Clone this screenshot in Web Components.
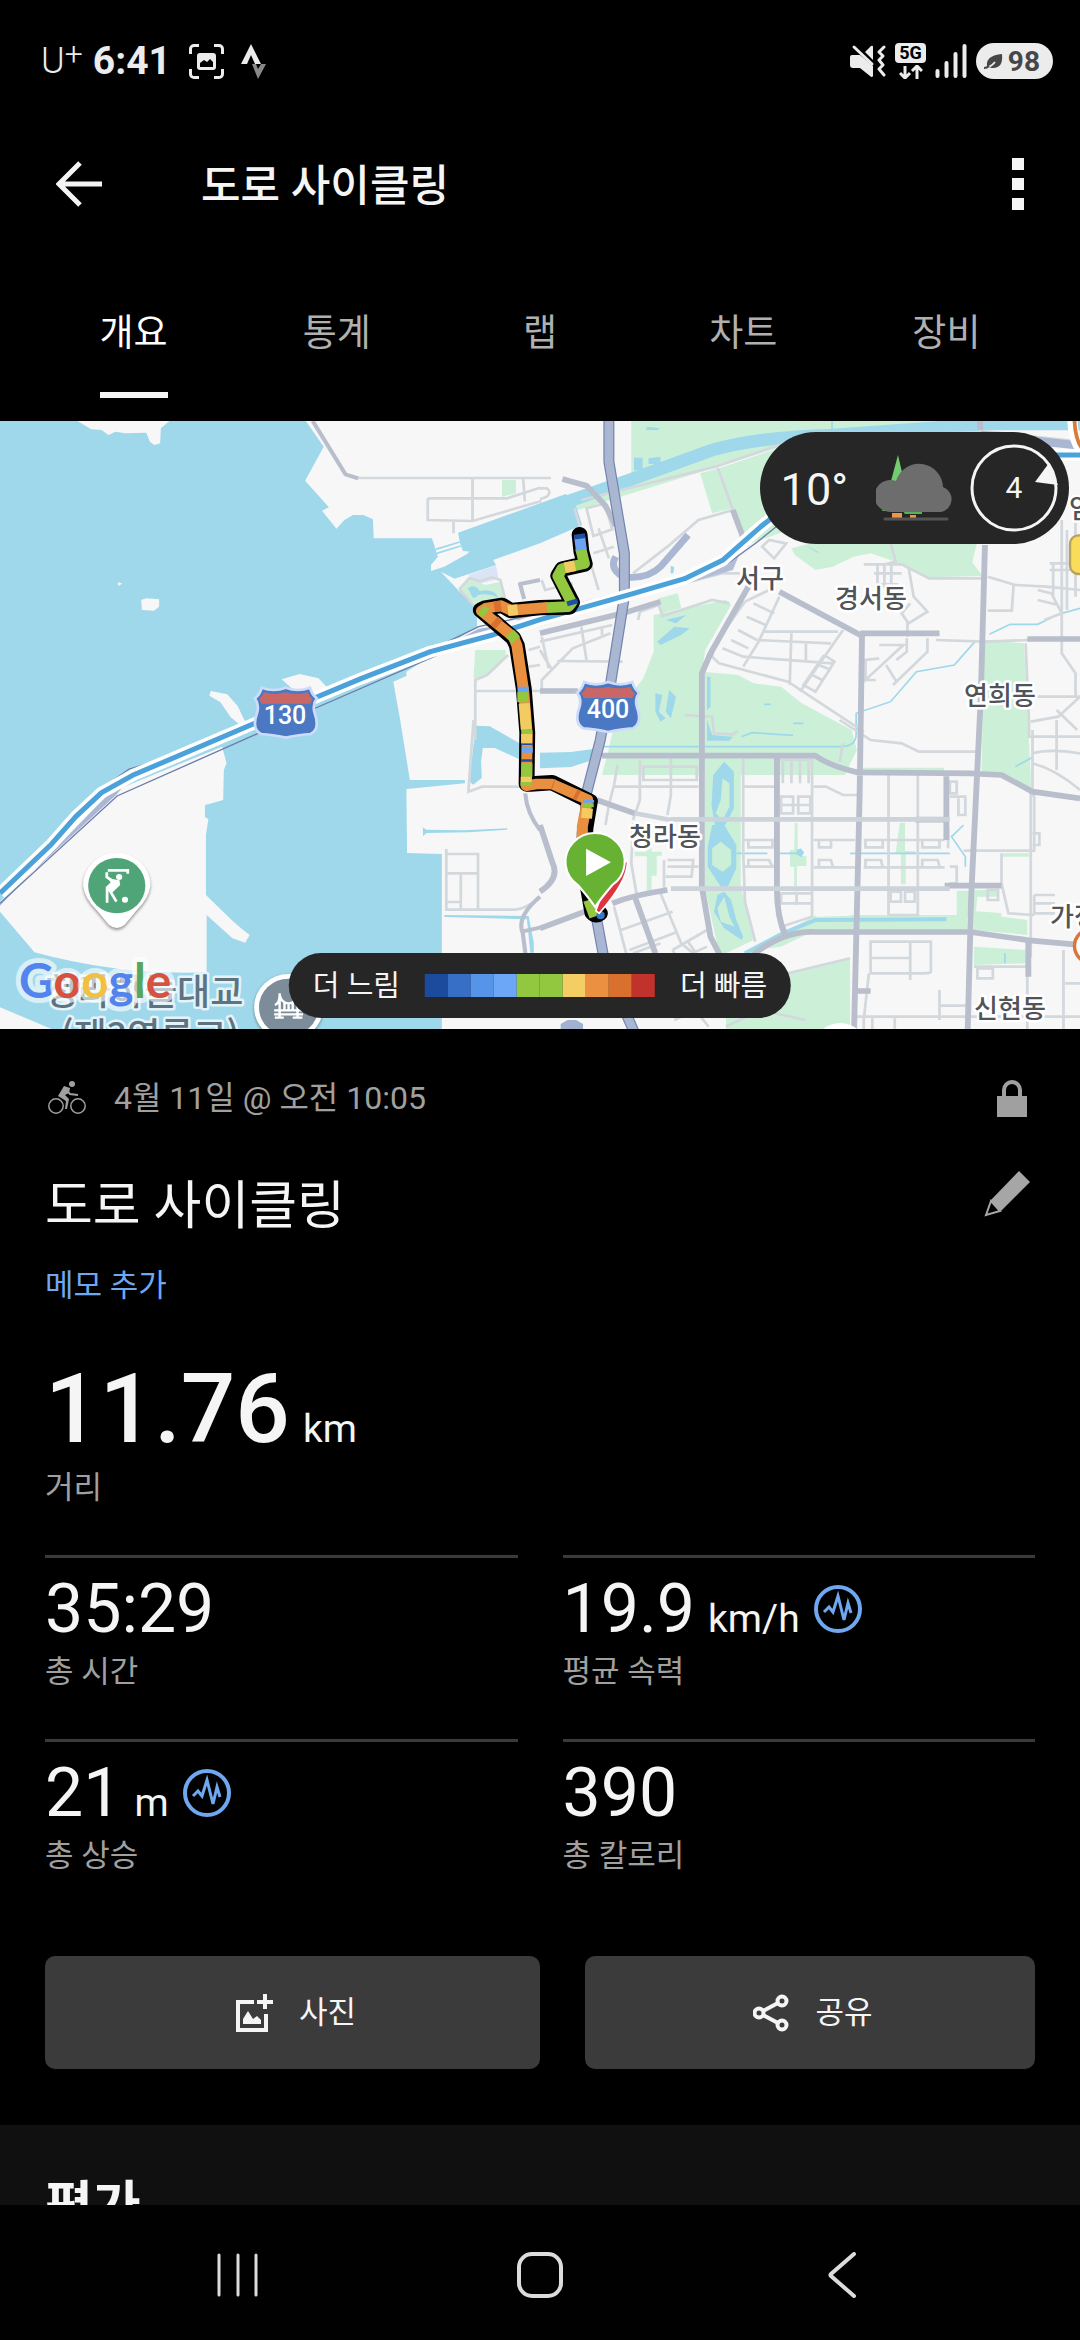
<!DOCTYPE html>
<html lang="ko">
<head>
<meta charset="utf-8">
<meta name="viewport" content="width=device-width, initial-scale=1">
<title>도로 사이클링</title>
<style>
html, body {
    margin: 0;
    height: 100%;
    background: #000;
}

body {
    font-family: Roboto, "Noto Sans CJK KR", sans-serif;
    color: #f5f5f5;
}
</style>
</head>
<body>
<activity-page>
    <status-bar slot="top"></status-bar>
    <app-header slot="top" data-title="도로 사이클링"></app-header>
    <tab-bar slot="top" data-tabs="개요,통계,랩,차트,장비"></tab-bar>

    <route-map>
        <weather-chip slot="weather"></weather-chip>
        <speed-legend slot="legend"></speed-legend>
    </route-map>

    <activity-summary>
        <span slot="date">4월 11일 @ 오전 10:05</span>
        <span slot="title">도로 사이클링</span>
        <stat-value slot="main" large data-value="11.76" data-unit="km" data-label="거리"></stat-value>
        <stat-value data-value="35:29" data-label="총 시간"></stat-value>
        <stat-value data-value="19.9" data-unit="km/h" data-label="평균 속력" data-graph></stat-value>
        <stat-value data-value="21" data-unit="m" data-label="총 상승" data-graph></stat-value>
        <stat-value data-value="390" data-label="총 칼로리"></stat-value>
    </activity-summary>

    <page-section>평가</page-section>

    <system-nav slot="bottom"></system-nav>
</activity-page>

<script>
const icons = {
    capture: [35, 35, `<path d="M1.5 10V5a3.500 3.500 0 0 1 3.500-3.500H10M25 1.500h5A3.500 3.500 0 0 1 33.500 5v5M33.500 25v5a3.500 3.500 0 0 1-3.500 3.500h-5M10 33.500H5A3.500 3.500 0 0 1 1.500 30v-5" fill="none" stroke="currentColor" stroke-width="3"/><rect x="8" y="9" width="19" height="17" rx="3" fill="currentColor"/><path d="M11 23v-4l4-3 3 2 3-3 3 3v5z" fill="#000"/>`],
    strava: [25, 35, `<path d="M10 0 0 20h6l4-9 4 9h6z" fill="currentColor"/><path d="M11 20h4l2 5 3-5h5l-8 15z" fill="#888"/>`],
    mute: [36, 34, `<path d="M0 13q0-2 2-2h8l13 11v10q-1 2-3 0L10 24H3q-3 0-3-3zM15 8l6-6q2-1 2 1v13z" fill="currentColor"/><path d="M4 3l18 17" stroke="currentColor" stroke-width="3" stroke-linecap="round"/><path d="M34 3l-5 5 4 4-4 4 4 5-4 4 5 6" fill="none" stroke="currentColor" stroke-width="3" stroke-linecap="round" stroke-linejoin="round"/>`],
    data: [24, 14, `<path d="M6 1v11M1 8l5 5 5-5M18 14V3M13 6l5-5 5 5" fill="none" stroke="currentColor" stroke-width="3"/>`],
    signal: [32, 34, `<path d="M2.500 27v5M11.500 19v13M20.500 10v22M29.500 2v30" stroke="currentColor" stroke-width="4" stroke-linecap="round"/>`],
    leaf: [19, 15, `<path d="M3 12C2 5 7 1 18 0c1 9-2 14-9 14-2 0-3-.5-4-1z" fill="currentColor"/><path d="M1 14q6-1 10-6" fill="none" stroke="#e8e8e8" stroke-width="2"/><path d="M0 14q3 0 5-2" fill="none" stroke="currentColor" stroke-width="2"/>`],
    back: [46, 46, `<path d="M24 2 3 23l21 21M3 23h43" fill="none" stroke="currentColor" stroke-width="5"/>`],
    more: [12, 52, `<path d="M0 0h12v12H0zM0 20h12v12H0zM0 40h12v12H0z" fill="currentColor"/>`],
    bike: [38, 34, `<g fill="none" stroke="currentColor"><circle cx="8" cy="25" r="7.200" stroke-width="1.500"/><circle cx="30" cy="25" r="7.200" stroke-width="1.500"/><path d="M18 8l4 5 8 1" stroke-width="2"/></g><path d="M16 5l6 2-1 5-4 2 4 4-2 10h-2l1-8-8-5z" fill="currentColor"/><circle cx="24" cy="3" r="3" fill="currentColor"/>`],
    lock: [30, 38, `<path d="M0 17h30v21H0z" fill="currentColor"/><path d="M7 18v-7a8 8 0 0 1 16 0v7" fill="none" stroke="currentColor" stroke-width="4"/>`],
    pencil: [46, 46, `<path d="M35 0l11 11-29 29L6 30z" fill="currentColor"/><path d="M7 30 2 44l14-4z" fill="none" stroke="currentColor" stroke-width="2"/>`],
    pulse: [48, 48, `<g fill="none" stroke="#6fa8f0"><circle cx="24" cy="24" r="22" stroke-width="4"/><path d="M10 27l5-5 4 5 5-16 6 24 4-17 3 10" stroke-width="3"/></g>`],
    photo: [38, 38, `<path d="M19 8H3v28h28V20" fill="none" stroke="currentColor" stroke-width="4"/><path d="M30 0v15M22 8h16" stroke="currentColor" stroke-width="4"/><path d="M8 30v-5l5-8 5 8 4-3 4 4v4z" fill="currentColor"/>`],
    share: [36, 38, `<g fill="none" stroke="currentColor" stroke-width="4"><circle cx="29" cy="7" r="4.500"/><circle cx="6" cy="19" r="4.500"/><circle cx="29" cy="31" r="4.500"/><path d="M10 17l15-8M10 21l15 8"/></g>`],
    recents: [42, 44, `<path d="M2 2v40M21 2v40M39 2v40" stroke="currentColor" stroke-width="3" stroke-linecap="round"/>`],
    home: [46, 46, `<rect x="2" y="2" width="42" height="42" rx="13" fill="none" stroke="currentColor" stroke-width="4"/>`],
    navback: [28, 46, `<path d="M26 2 3 22q-1 1 0 2l23 20" fill="none" stroke="currentColor" stroke-width="4" stroke-linecap="round"/>`],
    weather: [78, 66, `<path d="M22 0l6 26H15z" fill="#71cd6e"/><path d="M8 50h38v9H29l-2-3H6z" fill="#58b357"/><path d="M16 58h10v6H16zM34 60h6v4h-6z" fill="#ee9748"/><path d="M14 57a16 16 0 1 1 6-31 24 24 0 0 1 47 6 13 13 0 0 1-2 25z" fill="#6d6d6d"/><path d="M9 64h62" stroke="#545454" stroke-width="3" stroke-linecap="round"/>`],
};

class AppIcon extends HTMLElement {
    constructor() {
        super();
        this.attachShadow({ mode: "open" });
    }

    connectedCallback() {
        const [w, h, body] = icons[this.getAttribute("name")];
        this.shadowRoot.innerHTML = `
<style>
:host { display: inline-flex; flex: none; }
</style>
<svg width="${w}" height="${h}" viewBox="0 0 ${w} ${h}" aria-hidden="true">${body}</svg>`;
    }
}

class StatusBar extends HTMLElement {
    constructor() {
        super();
        this.attachShadow({ mode: "open" }).innerHTML = `
<style>
:host {
    display: flex;
    justify-content: space-between;
    align-items: center;
    height: 98px;
    padding: 12px 27px 0 41px;
    color: #ececec;
}
div { display: flex; align-items: center; }
.carrier { font-size: 36px; font-weight: 300; line-height: 40px; }
sup { font-size: 32px; line-height: 20px; vertical-align: 8px; }
time { font-size: 39px; font-weight: 700; line-height: 40px; margin: 0 18px 0 10px; }
.left app-icon + app-icon { margin-left: 17px; }
.right { gap: 9px; }
.net { flex-direction: column; gap: 2px; }
.net span {
    background: #ececec;
    color: #000;
    border-radius: 4px;
    font-size: 18px;
    font-weight: 700;
    line-height: 20px;
    padding: 0 4px;
}
.battery {
    gap: 5px;
    height: 36px;
    padding: 0 13px 0 8px;
    border-radius: 18px;
    background: #ececec;
    color: #464649;
    font-size: 28px;
    font-weight: 700;
}
</style>
<div class="left">
    <span class="carrier">U<sup>+</sup></span>
    <time>6:41</time>
    <app-icon name="capture"></app-icon>
    <app-icon name="strava"></app-icon>
</div>
<div class="right">
    <app-icon name="mute"></app-icon>
    <div class="net"><span>5G</span><app-icon name="data"></app-icon></div>
    <app-icon name="signal"></app-icon>
    <div class="battery"><app-icon name="leaf"></app-icon>98</div>
</div>`;
    }
}

class AppHeader extends HTMLElement {
    constructor() {
        super();
        this.attachShadow({ mode: "open" }).innerHTML = `
<style>
:host {
    display: flex;
    align-items: center;
    height: 148px;
    padding: 0 40px;
}
button {
    display: flex;
    justify-content: center;
    padding: 16px;
    border: 0;
    background: none;
    color: #f5f5f5;
}
h1 {
    flex: 1;
    margin: 0 0 0 83px;
    padding-top: 4px;
    font-size: 43px;
    font-weight: 500;
    line-height: 60px;
}
</style>
<button aria-label="뒤로"><app-icon name="back"></app-icon></button>
<h1></h1>
<button aria-label="더보기"><app-icon name="more"></app-icon></button>`;
    }

    connectedCallback() {
        this.shadowRoot.querySelector("h1").textContent = this.getAttribute("data-title");
    }
}

class TabBar extends HTMLElement {
    constructor() {
        super();
        this.attachShadow({ mode: "open" }).innerHTML = `
<style>
:host { display: block; }
nav {
    display: grid;
    grid-auto-flow: column;
    grid-auto-columns: 1fr;
    justify-items: center;
    padding: 48px 32px 23px;
}
button {
    padding: 0 0 30px;
    border: 0;
    border-bottom: 6px solid transparent;
    background: none;
    color: #b0b0b0;
    font: 400 37px/56px Roboto, "Noto Sans CJK KR", sans-serif;
}
button[aria-selected="true"] { color: #fff; border-color: #f5f5f5; }
</style>
<nav role="tablist"></nav>`;
        this.nav = this.shadowRoot.querySelector("nav");
    }

    connectedCallback() {
        this.nav.innerHTML = this.getAttribute("data-tabs").split(",")
            .map((name, i) => `<button role="tab" aria-selected="${i === 0}">${name}</button>`)
            .join("");
    }
}

class WeatherChip extends HTMLElement {
    constructor() {
        super();
        this.attachShadow({ mode: "open" }).innerHTML = `
<style>
:host {
    display: flex;
    align-items: center;
    height: 112px;
    padding: 0 11px 0 21px;
    border-radius: 56px;
    background: #262626;
}
.temp { font-size: 45px; line-height: 56px; margin-right: 28px; padding-top: 4px; }
.wind {
    display: grid;
    place-items: center;
    margin-left: 16px;
    font-size: 30px;
    line-height: 36px;
}
.wind > * { grid-area: 1 / 1; }
</style>
<span class="temp">10°</span>
<app-icon name="weather"></app-icon>
<div class="wind">
    <svg width="88" height="88" viewBox="0 0 88 88"><circle cx="44" cy="44" r="42" fill="none" stroke="#f5f5f5" stroke-width="3"/><path d="M65 38 79 19l9 22z" fill="#f5f5f5"/></svg>
    <span>4</span>
</div>`;
    }
}

const speeds = ["#1c4a9c", "#386fc6", "#5694ea", "#6ca6f6", "#92c740", "#92c740", "#f4cd65", "#ea9040", "#da702e", "#c1322c"];

class SpeedLegend extends HTMLElement {
    constructor() {
        super();
        this.attachShadow({ mode: "open" }).innerHTML = `
<style>
:host {
    display: flex;
    align-items: center;
    gap: 25px;
    height: 65px;
    padding: 0 24px;
    border-radius: 33px;
    background: #262626;
    font-size: 29px;
    line-height: 40px;
    white-space: nowrap;
}
.bar { display: flex; }
i { width: 23px; height: 23px; }
</style>
<span>더 느림</span>
<div class="bar">${speeds.map(c => `<i style="background:${c}"></i>`).join("")}</div>
<span>더 빠름</span>`;
    }
}

const shield = `<path d="M-90-40q14-10 20-32 35 14 70 0 35 14 70 0 6 22 20 32-14 20-6 45 16 48-12 62-32 2-72 11-40-9-72-11-28-14-12-62 8-25-6-45z" fill="#4a78c2" stroke="#cddcfa" stroke-width="8"/><path d="M-78-38q10-6 14-20 32 10 64 0 32 10 64 0 4 14 14 20l-8 14H-70z" fill="#c96767"/>`;

class RouteMap extends HTMLElement {
    constructor() {
        super();
        this.attachShadow({ mode: "open" }).innerHTML = `
<style>
:host { display: block; position: relative; height: 608px; }
svg { display: block; width: 100%; height: 100%; background: #f7f7f7; }
slot { display: block; position: absolute; }
slot[name="weather"] { top: 11px; right: 11px; }
slot[name="legend"] { bottom: 11px; left: 50%; transform: translateX(-50%); }

.water { fill: #9fd8eb; }
.creek { fill: none; stroke: #9fd8eb; stroke-width: 5; }
.park { fill: #ccefd8; }
.land { fill: #f7f7f7; }
.lane { fill: none; stroke: #d3d8dd; stroke-width: 8; }
.road { fill: none; stroke: #b8becb; stroke-width: 17; stroke-linejoin: round; }
.edge { fill: none; stroke: #7584ad; stroke-width: 32; stroke-linejoin: round; }
.highway { fill: none; stroke: #aab7d3; stroke-width: 25; stroke-linejoin: round; }
.case { fill: none; stroke: #fff; stroke-width: 36; stroke-linejoin: round; }
.rail { fill: none; stroke: #4ba1d9; stroke-width: 15; stroke-linejoin: round; }
.track { fill: none; stroke-width: 32; stroke-linejoin: round; }
.place { font: 500 26px "Noto Sans CJK KR", sans-serif; fill: #505357; stroke: #fff; stroke-width: 5px; stroke-linejoin: round; paint-order: stroke; text-anchor: middle; }
.bridge { font-size: 36px; fill: #5e7380; stroke: #e3f3fa; }
.number { font: 500 25px Roboto, sans-serif; fill: #fff; text-anchor: middle; }
.google { font: 700 48px Lato, sans-serif; stroke: #fff; stroke-opacity: .6; stroke-width: 10px; stroke-linejoin: round; paint-order: stroke; }
</style>
<svg viewBox="0 0 1080 608" preserveAspectRatio="xMidYMid slice" role="img" aria-label="경로 지도">
<!-- geometry is on a grid of about 3 units per pixel -->
<g transform="scale(.34439 .33333) translate(0 -3)">
    <path class="water" d="M0 3H225L265 28 295 30 315 45 335 35 365 40 425 38 435 65 448 75 465 70 467 25 492 3H888L940 80 886 182 955 262 935 272 977 326 1000 300 1025 285 1055 285 1083 298 1085 355H1254L1262 378 1272 410 1252 435V452L1290 440 1360 400 1340 395 1330 338 1568 250 1643 222 1668 240 1690 315 1568 370 1432 420 1440 435 1320 476 1280 455 1330 510 1385 560V620L1180 755V768L1142 785 1162 900 1190 1080H1350V1090L1180 1107 1182 1299 1283 1302V1827H150L0 1762z"/>
    <path class="land" d="M1262 378l70-20 12 35 22 2-75 30-20 20-19 8v-18l20-25z"/>
    <path d="M1265 388l70-22M1268 400l70-22" stroke="#9fd8eb" stroke-width="5"/>
    <path class="land" d="M410 540l15-5 37 3v22l-15 12-35-2zM343 486l12 5-12 7zM818 778l52-16 55 13 23 25-8 22-80-5zM612 813l48 10 30 35 22 47-12 12-30-25-30-45-32-20zM685 900h15l12 15z"/>
    <path class="land" d="M645 980l13 50-8 20-2 90-33 10-20 5v35l10 8-7 47v180l77 77 25 23 25 20-13 23-37-13-75-70v172q-250 10-500-60L0 1475V1445L290 1130z"/>
    <path class="park" d="M1360 475l50 20 45-10 12 50-80 20-58-42zM1380 690h88v20l-58 60-35 5zM1458 180h40v40l-40 10z"/>
    <path d="M1360 465l80-30 8 42-60 15z" fill="#dbe4f5"/>
    <path class="water" d="M1358 505q20-15 35 8 40-10 55 20-30-15-60-8-5 10-15 8zM1382 917l40 2 120 70v45l-105-50-35 0-5 40 2 50-25 20-12-10z"/>
    <path class="water" d="M1228 1222l10 7 110 2 125-6v4l-110 8-125 2-10 10zM1290 1485l245 3 15 80v30h-10l-10-100-240-7z"/>
    <path class="lane" d="M1040 174H1600M1372 174v128M1242 235v65l130 3 200-60M1242 235h230l96-32M1519 174l5 70M1317 305v35M1335 510l50 55 80-35-12-50-25-8-35 12-30-10-30 35M1380 960v-180l35-15 60-60M1380 813h190M1535 690l33-10M1535 740l33-5M1375 900l-15 215 40-15h110M1296 1287v182h200q40-5 70-40M1296 1302h92v168M1296 1360h92M1338 1362v104M1296 1446h42"/>
    <path class="road" d="M908 3l95 160 37 12M1525 1120q5 60 43 110M1568 1430q-70 60-50 110l10 80M1515 1535l53-12M1568 480l-58 12 12 45" style="stroke-width:12"/>

    <g transform="translate(1568 0)">
        <path class="park" d="M265 3H1300L700 80 515 140 110 270 95 240 265 170zM465 160l55-15 200-70h200v180L600 375l-40-110-60 15zM730 385l50-13h488l-13 55 30 41-155 4-70-37-100-35-50 10-60 30-50 10-60-45z"/>
        <path class="park" d="M330 585l210-45 15 15-75 135-10 65 105 10 45 25 80 10 60 50 145 80 15 60-35 75H180l20-80 25-110 75-100 30-80zM1290 660l115 10 20 400v35l-80-45-63-5zM345 535l55-15 10 45-55 15zM1420 3h148v30l-148-15z"/>
        <path class="park" d="M478 1015h105v385l37 160-80 40h-20l-42-200zM620 1590l180-105h440v45H800l-100 50zM720 1660l180-45v212H540v-40zM938 1043h235v12H938zM740 1208h8v100h26v30h-28v60h-8v-58h-12v-50h12zM1045 1208h15v85h30v10h-28v90h-14v-90h-16zM275 1295h35v-80h14v80h30v12h-15v60h-15v45h-14v-103h-35zM1260 1410h70l10 80 75 10v45l-155-15zM1260 1580l155 10v40l-155 5zM1340 1300h80v10h-80zM1210 1412h35v80h-35z"/>
        <path class="land" d="M1270 1430h60l20 50-84-6zM800 1412h100v75l-100 3z"/>
        <path class="water" d="M273 113h25v38h-25zM315 115l35-5v22h-35zM310 20l40 5-10 5h-32zM340 665l50-45 45 5-25 20-60 30zM365 600l60-15-30 25zM485 770h10v90l-10 10zM335 820l20 5-10 50 20 20-15 10-15-30zM375 810l20 20-15 65-15-20zM485 900l15 45 60 5-10 12h-65zM770 375l45 25-15-5zM380 437l10 5-3 18h-8z"/>
        <path class="water" d="M535 1025l28 30v110l-25 50h-30l-10-60 5-90zM500 1215h35l35 60v70l-25 55h-20l-38-60v-60zM535 1415l20 25 15 60 20 50-5 10-50-35-30-50 10-50z"/>
        <path class="park" d="M530 1075l20 15v70l-20 40-20-20 15-40zM525 1265l30 25v45l-25 20-30-20v-50zM535 1430l15 60 15 30-40-15-10-40z"/>
        <path class="water" d="M0 998l90-2 70-10-10 35-60 20-90 4zM745 1290l12-5 10 12-8 15-14-8z"/>
        <path d="M85 243L260 180 500 90Q640 50 850 45L1300 12H1568" fill="none" stroke="#9fd8eb" stroke-width="38"/>
        <path class="creek" d="M848 3v30M180 980H870q50 0 48-40v-60l100-35 75-90 110-20 60-70M1305 643l60-30h80l60-30 63-18M1380 1040l50-28M570 1300h90M690 1300h65M900 1300h290M1230 1215l-35 35 40 60v30M1350 1600v30M585 950l30-12 120 8M735 910h30M650 853h20"/>
        <path d="M595 1600l110-60 95-40 380-2" fill="none" stroke="#9fd8eb" stroke-width="12"/>

        <path class="lane" d="M0 205h20q15 10 0 25l-20 8M135 265l45-12 15 20 15 55-55 20zM170 325l30 90M155 400l60-20M5 480l10 30 80-20M100 265l70 245M120 240l390-100 200-70 140-15 450-20 268 30M515 140l45 130-100 30-90 80-100 80M350 590l150-50 50 10M380 500l150-40h50M285 600l5-25 55-20 10 30M5 650l20 95M0 665l210-50M120 620l15 100M180 620v25M5 810V780l90-95 110-45M50 723l190 2M0 690l35 60"/>
        <path class="lane" d="M595 545l70-35M595 545l-90 130-5 35 20 20 200 55 220 150M695 530l-60 135-45 75M620 550l60 30M600 590l55 25M575 630l55 30M555 660l50 25M530 685l60 25 260 20M650 635h215M630 660l215 10M730 640l-5 155M772 670v50M880 630l-125 185M825 705l30 20-55 90-35-20 60-90M810 735l35 15M790 765l30 15M645 380l35 35 35-45-50-10zM1018 370l15 55-40 10M940 433h110l80 42h160M980 433v60h60M1000 433v70M1020 433v70M970 460h80M1070 440l15 90 40 45-55 35-20-30 25-30M1067 605v45M985 675h70l-110 105v-60l40-5M1065 655v40l-30 25M1125 655v40l-100 100M1005 735l30 50M945 780h30"/>
        <path class="lane" d="M1300 470l80 25 90 5 98 10M1375 497l-5 75h-70M1445 510l40 10 30 60-50 20M1480 430h60M1480 450h60M1490 430v100M1515 300v400l40 60v70M1530 330v240M1445 830h123M1410 670l10 240v40h148M1425 905l80-15 63-60M1500 870l60 60M1150 660l140 5 130-5M1445 540l60 15M1555 280v250M420 885l80 5 5 50 55 3 15-10"/>
        <path class="lane" d="M870 900l90 60 90 10 50 25h165M880 970l-10 55M225 1035l-10 60 -15 60-10 60M215 1100h245M290 1020v120l-20 60M380 1015v110l-10 60M300 1040h155v40H300zM270 1210l-5 120 15 90M360 1320v90M370 1320h75l-5 50h-75M370 1340h90M215 1460l60 240M235 1530l150-55M260 1590l140-55M350 1420l60 150 70 60M385 1590l100-60M385 1590l15 30 85-40M430 1565l20 30M270 1600l80-30"/>
        <path class="lane" d="M590 1015v280l5 150 30 120M590 1100h100M590 1260h100M590 1340h100M605 1262v20h70v-20M605 1340v-20h60l10 20M695 1025v-5h95v470l-90 30M705 1025v65M730 1025v65M755 1025v65M780 1025v65M795 1100h35l50 25h50M795 1260h120M795 1342h120M1012 1065v420h85V1065M700 1130h35v50h-35zM750 1130h35v50h-35zM700 1155h90M700 1420h90v30h-90zM745 1415v40M810 1262v20h35v-20M810 1340v-20h35l5 20M945 1262v20h50v-20M945 1340v-20h45l5 20M1110 1262v20h50v-20M1110 1340v-20h45l5 20M1018 1415h30v30h-30zM1060 1415h28v30h-28zM940 1260h235M940 1342h235M1190 1085h20v35h-20zM1190 1130h45v55h-20v-50M1185 1225v60M1190 1340h20v50h-20M1230 1292h205V1110M1340 1300v90l20 90 75 5M1430 1240h20v35h-20M1425 1110v500M1300 1410h30v30h-30zM1435 1425h60M1435 1450h60M1435 1480h60M1435 1425v60"/>
        <path class="lane" d="M960 1565h175v90q0 5-20 5H960zM960 1614h115M1075 1565v115M955 1660l-15 140v27M915 1790h653M720 1660l180-45M1160 1710v90M1160 1757h80M1270 1645h45v30h-45zM1415 1640h-155M1520 1590v237M1415 1560v267M1525 1690h43M965 1795v32M1030 1795v32M1430 930v200M1430 1000q50-15 138 0M1430 1030q70 20 138 80M1500 900v150M540 1820l100-50 130 30M390 1800l60-30 40 50" />
        <path class="road" d="M65 177l70 20 55 60 30 60M605 500l-110 200-25 60V1400l25 150 30 60M695 515l235 130M930 640h230M1415 657h153M935 645L928 1130 912 1827M1278 3V30M1292 375L1280 830 1252 1430 1242 1827M180 1007h620q40 30 120 50l330 3 90 5 90 50 138 20M688 1010v400q0 80 25 140M1180 1060v200M1090 1199h88M165 1140l110 40M0 1525l130-50M210 1450q60-25 160-40M275 1430l60 170M600 1620q100-90 200-84h450l170 25 130 12M1175 1397h165M0 640l240-60 110-35M0 813h110M1418 1560v110M560 270l40 110M700 1510l12 35M920 1713h40M0 1415q60-40 35-90l-35-110"/>
        <path d="M380 1198h810M380 1406h810M275 1180l105 20" fill="none" stroke="#cdd3da" stroke-width="14"/>
        <path d="M220 410q-20 35 20 60 70 10 110-30l80-95" fill="none" stroke="#aab7d3" stroke-width="20"/>
        <path d="M-70 600l320-90 230-50 100-60 -20 50-300 90-270 80z" fill="#b3bdd8"/>
        <path class="edge" d="M200-10V125L245 400V530L205 790 175 960 130 1140 165 1500 190 1640 275 1840"/>
        <path class="highway" d="M200-10V125L245 400V530L205 790 175 960 130 1140 165 1500 190 1640 275 1840"/>
        <path class="highway" d="M1280 45l290 32"/>
        <path d="M60 1827v-15l20-12h25l20 12v15z" fill="#a3b1d0"/>
    </g>

    <path d="M0 1447l340-325 40-52 400-175 470-194 140-75 130-20v20l-170 47-100 20-420 182-380 160-110 60L0 1457z" fill="#aab7d3"/>
    <path d="M0 1450l340-322 490-225 450-202M330 1080l45-33 100-30M1230 700l160-80 178-40L1870 500l160-30 90-45 80-60 60-50" fill="none" stroke="#6d7dab" stroke-width="4"/>
    <path class="case" d="M0 1420l150-148 70-82 75-72 90-52 450-198 215-93 200-80 180-50 138-46 270-78 150-45 110-55 110-100 60-50M3040 105h100"/>
    <path class="rail" d="M0 1420l150-148 70-82 75-72 90-52 450-198 215-93 200-80 180-50 138-46 270-78 150-45 110-55 110-100 60-50M3040 105h100"/>
    <path d="M3114 3q3 60 24 85" fill="none" stroke="#fff" stroke-width="30"/>
    <path d="M3120 3q3 60 24 85" fill="none" stroke="#d97a35" stroke-width="11"/>
    <rect x="3107" y="346" width="80" height="116" rx="25" fill="#fadc5b" stroke="#b5a45f" stroke-width="7"/>
    <circle cx="3172" cy="1578" r="52" fill="#fff" stroke="#d9763a" stroke-width="10"/>
    <circle cx="2440" cy="1885" r="76" fill="#fff"/>

    <g stroke-linecap="round">
        <path class="track" stroke="#000" style="stroke-width:46" d="M1683 344l5 50 10 38-65 15-12 20 40 80-8 14-85 2-85 9-25-16-50 8-12 6 95 85 10 22 20 130 10 130-2 155 12 0 62-4 110 56-15 92-2 100 24 142q10 12 22 2"/>
    </g>
    <path class="track" stroke="#e8903f" d="M1590 562l-107 9-28-14-45 8-12 8 93 78 10 26 20 140 10 130-3 150 30-5 45 0 103 47-15 80v120"/>
    <path class="track" stroke="#92c740" d="M1686 385l11 46-65 15-12 22 40 80-9 12-63 3M1397 568l14 12M1480 640l18 20M1518 815v32M1530 930v12M1530 1030v40M1527 1085v12M1708 1150v12M1709 1440l18 50"/>
    <path class="track" stroke="#6aa4f3" d="M1683 350l5 40M1519 800v15M1531 980v18M1709 1140v8"/>
    <path class="track" stroke="#1f509f" d="M1682 342l2 14M1531 970v5M1529 1018v7M1660 540l4 14"/>
    <path class="track" stroke="#f2cb62" d="M1640 443l30-6M1475 572l28-3M1522 850l6 78M1529 942v28M1528 1070v16M1706 1165l-3 30"/>
    <path class="track" stroke="#da702e" d="M1435 560l20-3M1435 602l14 12M1605 1092l3 1M1670 1122l10 5"/>
    <circle cx="1744" cy="1486" r="12" fill="#3b76c4"/>

    <path d="M1822 1320q4 60-82 160l-10-8 40-110z" fill="#e03340" stroke="#fff" stroke-width="5"/>
    <path d="M1732 1469q-14-22-50-66a86 86 0 1 1 100 0q-36 44-50 66z" transform="translate(-4 -8)" fill="#67b233" stroke="#fff" stroke-width="6"/>
    <path d="M1702 1286v82l72-41z" fill="#fff"/>

    <g transform="translate(830 875)">${shield}</g>
    <g transform="translate(1766 858)">${shield}</g>

    <path d="M241 1396a98 98 0 1 1 196 0q-5 40-40 75l-35 43q-23 20-46 0l-35-43q-35-35-40-75z" fill="#fff" filter="drop-shadow(0 6px 4px #0006)"/>
    <circle cx="339" cy="1397" r="83" fill="#4fa577"/>
    <g fill="none" stroke="#fff" stroke-width="8"><path d="M371 1361v-10h-58M310 1357v14l15 10M333 1381l-22 22v45M314 1403l24 42"/></g>
    <path d="M312 1375l35 6 2 14-22 22-20-8 16-20z" fill="#fff"/><circle cx="346" cy="1371" r="9" fill="#fff"/><circle cx="363" cy="1439" r="9" fill="#fff"/>

    <circle cx="838" cy="1762" r="93" fill="#7c8d99" stroke="#fff" stroke-width="14" filter="drop-shadow(0 4px 4px #0006)"/>
    <path d="M796 1771h84M796 1783h84M812 1720v75M864 1720v75M798 1793h26M850 1793h28M798 1755q14-5 14-30 6 25 26 25t26-25q0 25 14 30M826 1748v20M838 1750v20M850 1748v20" fill="none" stroke="#fff" stroke-width="7"/>
</g>

<text class="number" x="285" y="303">130</text>
<text class="number" x="608" y="297">400</text>
<text class="place" x="760" y="167">서구</text>
<text class="place" x="871" y="187">경서동</text>
<text class="place" x="1000" y="284">연희동</text>
<text class="place" x="665" y="425">청라동</text>
<text class="place" x="1010" y="597">신현동</text>
<text class="place" x="1074" y="505">가정</text>
<text class="place" x="1081" y="97">임</text>
<text class="place bridge" x="144" y="584">청라하늘대교</text>
<text class="place bridge" x="150" y="628">(제3연륙교)</text>
<text class="google" x="19" y="577"><tspan fill="#5383ec">G</tspan><tspan fill="#d85140">o</tspan><tspan fill="#f1bf42">o</tspan><tspan fill="#5383ec">g</tspan><tspan fill="#58a65c">l</tspan><tspan fill="#d85140">e</tspan></text>
</svg>
<slot name="weather"></slot>
<slot name="legend"></slot>`;
    }
}

class StatValue extends HTMLElement {
    constructor() {
        super();
        this.attachShadow({ mode: "open" }).innerHTML = `
<style>
:host { display: block; border-top: 3px solid #3a3a3a; padding-top: 15px; }
:host([large]) { border: 0; padding: 0; }
.value { display: flex; align-items: baseline; font-size: 68px; line-height: 72px; }
:host([large]) .value { line-height: 96px; margin-bottom: 10px; }
:host([large]) b { font-size: 96px; font-weight: 500; }
b { font-weight: 400; }
.value .unit { font-size: 39px; line-height: 40px; margin-left: 13px; }
.label { margin-top: 6px; color: #a0a0a0; font-size: 31px; line-height: 42px; }
app-icon { align-self: center; margin-left: 14px; }
</style>
<div class="value"><b></b></div>
<div class="label"></div>`;
    }

    connectedCallback() {
        const value = this.shadowRoot.querySelector(".value");
        this.shadowRoot.querySelector("b").textContent = this.getAttribute("data-value");
        this.shadowRoot.querySelector(".label").textContent = this.getAttribute("data-label");
        if (this.hasAttribute("data-unit")) {
            value.insertAdjacentHTML("beforeend", `<span class="unit">${this.getAttribute("data-unit")}</span>`);
        }
        if (this.hasAttribute("data-graph")) {
            value.insertAdjacentHTML("beforeend", `<app-icon name="pulse"></app-icon>`);
        }
    }
}

class ActivitySummary extends HTMLElement {
    constructor() {
        super();
        this.attachShadow({ mode: "open" }).innerHTML = `
<style>
:host { display: block; padding: 43px 45px 56px; }
.meta, .title { display: flex; align-items: center; }
.meta { gap: 28px; padding: 0 8px 0 3px; color: #a0a0a0; font-size: 32px; line-height: 52px; }
.date { flex: 1; }
.title { justify-content: space-between; align-items: start; margin-top: 42px; }
h2 { margin: 0; padding-top: 3px; font-size: 52px; font-weight: 400; line-height: 76px; }
.title button { display: flex; padding: 5px; border: 0; background: none; color: #a6a6a6; }
a { display: block; width: max-content; margin: 19px 0 53px; color: #6fa8f0; font-size: 31px; line-height: 44px; text-decoration: none; }
.stats { display: grid; grid-template-columns: 1fr 1fr; gap: 46px 45px; margin-top: 46px; }
.actions { display: grid; grid-template-columns: 11fr 10fr; gap: 45px; margin-top: 79px; }
.actions button {
    display: flex;
    justify-content: center;
    align-items: center;
    gap: 26px;
    height: 113px;
    padding: 0 0 0 6px;
    border: 0;
    border-radius: 10px;
    background: #3b3b3b;
    color: #f5f5f5;
    font: 400 31px/44px Roboto, "Noto Sans CJK KR", sans-serif;
}
</style>
<div class="meta">
    <app-icon name="bike"></app-icon>
    <div class="date"><slot name="date"></slot></div>
    <app-icon name="lock"></app-icon>
</div>
<div class="title">
    <h2><slot name="title"></slot></h2>
    <button aria-label="이름 편집"><app-icon name="pencil"></app-icon></button>
</div>
<a href="#memo">메모 추가</a>
<slot name="main"></slot>
<div class="stats"><slot></slot></div>
<div class="actions">
    <button><app-icon name="photo"></app-icon>사진</button>
    <button><app-icon name="share"></app-icon>공유</button>
</div>`;
    }
}

class PageSection extends HTMLElement {
    constructor() {
        super();
        this.attachShadow({ mode: "open" }).innerHTML = `
<style>
:host { display: block; padding: 42px 45px; background: #101010; }
h2 { margin: 0; font-size: 52px; font-weight: 700; line-height: 80px; }
</style>
<h2><slot></slot></h2>`;
    }
}

class SystemNav extends HTMLElement {
    constructor() {
        super();
        this.attachShadow({ mode: "open" }).innerHTML = `
<style>
:host {
    display: grid;
    grid-template-columns: repeat(3, 1fr);
    height: 130px;
    padding: 5px 87px 0;
    background: #010101;
}
button {
    display: flex;
    justify-content: center;
    align-items: center;
    border: 0;
    background: none;
    color: #dcdcdc;
}
</style>
<button aria-label="최근 앱"><app-icon name="recents"></app-icon></button>
<button aria-label="홈"><app-icon name="home"></app-icon></button>
<button aria-label="뒤로"><app-icon name="navback"></app-icon></button>`;
    }
}

class ActivityPage extends HTMLElement {
    constructor() {
        super();
        this.attachShadow({ mode: "open" }).innerHTML = `
<style>
:host { display: flex; flex-direction: column; height: 100vh; }
main { flex: 1; min-height: 0; overflow-y: auto; scrollbar-width: none; }
</style>
<slot name="top"></slot>
<main><slot></slot></main>
<slot name="bottom"></slot>`;
    }
}

customElements.define('app-icon', AppIcon);
customElements.define('status-bar', StatusBar);
customElements.define('app-header', AppHeader);
customElements.define('tab-bar', TabBar);
customElements.define('weather-chip', WeatherChip);
customElements.define('speed-legend', SpeedLegend);
customElements.define('route-map', RouteMap);
customElements.define('stat-value', StatValue);
customElements.define('activity-summary', ActivitySummary);
customElements.define('page-section', PageSection);
customElements.define('system-nav', SystemNav);
customElements.define('activity-page', ActivityPage);
</script>
</body>
</html>
